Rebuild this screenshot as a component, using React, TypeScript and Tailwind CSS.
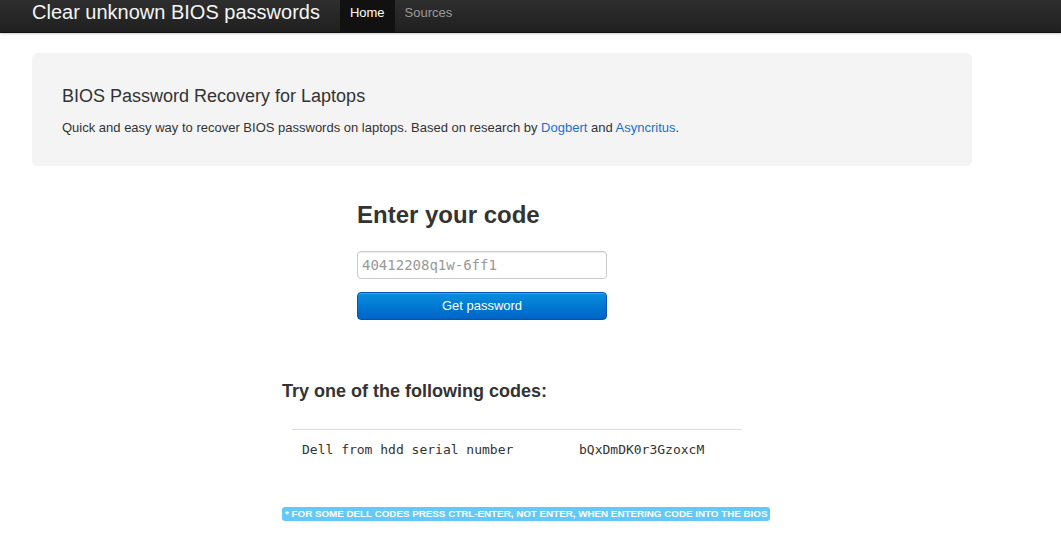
import React from "react";

const sans = { fontFamily: '"Liberation Sans", Arial, sans-serif' };

const codes = [{ label: "Dell from hdd serial number", code: "bQxDmDK0r3GzoxcM" }];

const App = () => {
    return (
        <div className="min-h-[535px] bg-white text-[#333] text-[13px] leading-[18px] font-['Liberation_Sans',Arial,sans-serif]">
            <div className="h-[33px] bg-gradient-to-b from-[#2e2e2e] to-[#202020] border-b border-[#111] shadow-[0_1px_2px_rgba(0,0,0,0.2)]">
                <div className="flex h-full items-stretch pl-8">
                    <a className="text-[20px] leading-[24px] text-[#f5f5f5] mr-5">Clear unknown BIOS passwords</a>
                    <a className="px-2.5 pt-[4px] bg-[#111] text-white">Home</a>
                    <a className="px-2.5 pt-[4px] text-[#999]">Sources</a>
                </div>
            </div>

            <div className="w-[940px] ml-8 mt-5">
                <div className="bg-[#f4f4f4] rounded-md px-[30px] pt-[33px] pb-[29px]">
                    <h1 className="text-[18px] leading-[20px] text-[#333] mb-[13px]">BIOS Password Recovery for Laptops</h1>
                    <p>
                        Quick and easy way to recover BIOS passwords on laptops. Based on research by{" "}
                        <a className="text-[#1b6fd8]">Dogbert</a> and <a className="text-[#1b6fd8]">Asyncritus</a>.
                    </p>
                </div>

                <div className="ml-[325px] w-[250px] mt-[34px]">
                    <h2 className="text-[24px] leading-[30px] font-bold text-[#333]">Enter your code</h2>
                    <input
                        placeholder="40412208q1w-6ff1"
                        className="block mt-[21px] w-[250px] h-[28px] px-[4px] border border-[#ccc] rounded bg-white shadow-[inset_0_1px_1px_rgba(0,0,0,0.075)] outline-none text-[14px] font-['DejaVu_Sans_Mono',monospace] placeholder:text-[#999]"
                    />
                    <button
                        className="block mt-[13px] w-[250px] h-[28px] rounded border border-[#0055b5] bg-gradient-to-b from-[#0b8fdf] to-[#0063c6] text-white text-[13px] shadow-[inset_0_1px_0_rgba(255,255,255,0.2)]"
                        style={sans}
                    >
                        Get password
                    </button>
                </div>

                <div className="ml-[250px] mt-[60px]">
                    <h3 className="text-[18px] leading-[22px] font-bold text-[#333]">Try one of the following codes:</h3>
                    <table className="ml-[10px] mt-[27px] w-[450px] border-collapse font-['DejaVu_Sans_Mono',monospace] text-[13px]">
                        <tbody>
                            {codes.map((c) => (
                                <tr key={c.code} className="border-t border-[#ddd]">
                                    <td className="w-[279px] pl-[10px] pr-2 pt-[10px] pb-2 leading-[20px]">{c.label}</td>
                                    <td className="px-2 pt-[10px] pb-2 leading-[20px]">{c.code}</td>
                                </tr>
                            ))}
                        </tbody>
                    </table>
                    <div className="mt-[36px]">
                        <span className="inline-block bg-[#62c9f9] text-white font-bold text-[9.8px] leading-[14px] px-[3px] rounded-[3px] uppercase">
                            * For some Dell codes press Ctrl-Enter, not Enter, when entering code into the BIOS
                        </span>
                    </div>
                </div>
            </div>
        </div>
    );
};

export default App;
